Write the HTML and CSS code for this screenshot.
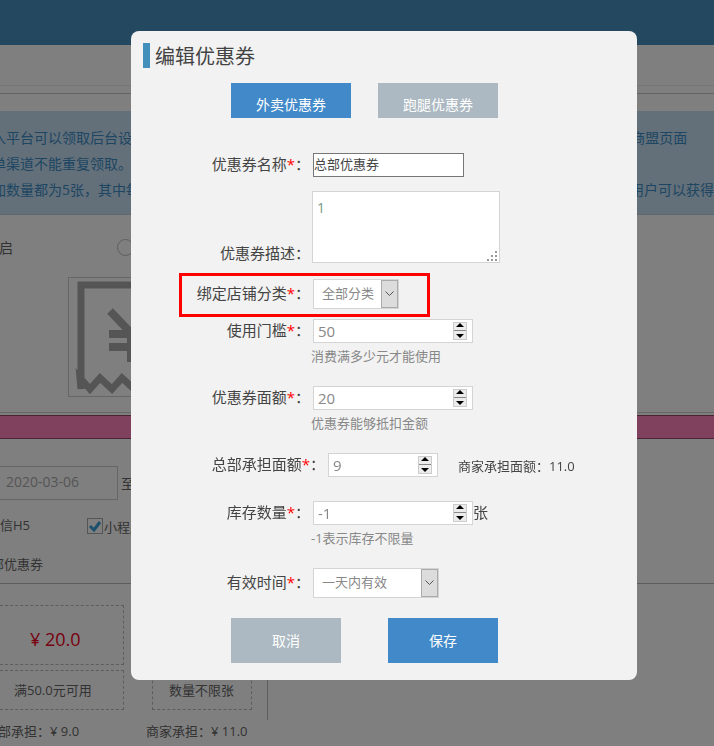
FILE: index.html
```html
<!DOCTYPE html>
<html lang="zh-CN">
<head>
<meta charset="utf-8">
<title>编辑优惠券</title>
<link rel="stylesheet" href="styles.css">
</head>
<body>
<div class="page">
  <header class="topbar"></header>
  <div class="nav-strip"></div>
  <div class="nav-under"></div>
  <section class="alert">
    <p>用户进入平台可以领取后台设置的优惠券，通过微信小程序及5个pc端渠道发放，领取成功后的优惠券将显示在商盟页面</p>
    <p>同一订单渠道不能重复领取。</p>
    <p>例如增加数量都为5张，其中每个渠道可领取的优惠券数量相同，当库存充足时，同一个渠道的所有注册成功的用户可以获得</p>
  </section>
  <div class="switch-row">
    <span class="switch-label">是否开启</span>
    <span class="radio"></span>
  </div>
  <div class="cover">
    <svg class="cover-icon" width="118" height="118" viewBox="0 0 118 118"><path d="M12 111V7h94v104l-9-11-10 11-12-11-10 11-12-11-10 11-12-11-10 11-10-11z" fill="none" stroke="#aaa" stroke-width="7"/><path d="M41 33l21 22 21-22M40 56h44M40 69h44" fill="none" stroke="#aaa" stroke-width="8"/><path d="M62 52v32" fill="none" stroke="#aaa" stroke-width="8"/></svg>
  </div>
  <div class="rule"></div>
  <div class="pink-bar"></div>
  <div class="date-row">
    <span class="date-input">2020-03-06</span>
    <span class="date-sep">至</span>
  </div>
  <div class="check-row">
    <span class="check-first">微信H5</span>
    <span class="checkbox"><svg width="14" height="14" viewBox="0 0 14 14"><path d="M2 7l4 4 6-8" fill="none" stroke="#3aa0d8" stroke-width="3"/></svg></span>
    <span>小程序</span>
  </div>
  <div class="section-title">全部优惠券</div>
  <div class="cards">
    <div class="card-col">
      <div class="price">¥ 20.0</div>
      <div class="cond">满50.0元可用</div>
    </div>
    <div class="card-second">
      <div class="cond cond-second">数量不限张</div>
    </div>
  </div>
  <div class="shares">
    <span class="share-a">总部承担：¥ 9.0</span>
    <span>商家承担：¥ 11.0</span>
  </div>
</div>

<div class="overlay"></div>

<div class="modal">
  <h2 class="modal-title">编辑优惠券</h2>
  <div class="tabs">
    <span class="tab tab-on">外卖优惠券</span>
    <span class="tab tab-off">跑腿优惠券</span>
  </div>

  <div class="row row-name">
    <label class="lbl">优惠券名称<i>*</i>：</label>
    <div class="field field-name">总部优惠券</div>
  </div>

  <div class="row row-desc">
    <label class="lbl">优惠券描述：</label>
    <div class="area"><span>1</span><svg class="grip" width="10" height="10" viewBox="0 0 10 10"><path d="M8 0h2v2H8zM4 4h2v2H4zM8 4h2v2H8zM0 8h2v2H0zM4 8h2v2H4zM8 8h2v2H8z" fill="#999"/></svg></div>
  </div>

  <div class="row row-shop">
    <label class="lbl">绑定店铺分类<i>*</i>：</label>
    <div class="select select-shop"><span class="sel-text">全部分类</span><span class="select-btn"><svg width="9" height="6" viewBox="0 0 9 6"><path d="M.5.5l4 4 4-4" fill="none" stroke="#555"/></svg></span></div>
    <span class="highlight"></span>
  </div>

  <div class="row row-tight">
    <label class="lbl">使用门槛<i>*</i>：</label>
    <div class="field field-num">50<span class="spin"><b class="up"></b><b class="down"></b></span></div>
  </div>
  <p class="hint">消费满多少元才能使用</p>

  <div class="row row-gap">
    <label class="lbl">优惠券面额<i>*</i>：</label>
    <div class="field field-num">20<span class="spin"><b class="up"></b><b class="down"></b></span></div>
  </div>
  <p class="hint">优惠券能够抵扣金额</p>

  <div class="row row-gap row-hq">
    <label class="lbl lbl-wide">总部承担面额<i>*</i>：</label>
    <div class="field field-hq">9<span class="spin"><b class="up"></b><b class="down"></b></span></div>
    <span class="merchant">商家承担面额：11.0</span>
  </div>

  <div class="row row-stock">
    <label class="lbl">库存数量<i>*</i>：</label>
    <div class="field field-num">-1<span class="spin"><b class="up"></b><b class="down"></b></span></div>
    <span class="unit">张</span>
  </div>
  <p class="hint">-1表示库存不限量</p>

  <div class="row row-gap">
    <label class="lbl">有效时间<i>*</i>：</label>
    <div class="select select-time"><span class="sel-text">一天内有效</span><span class="select-btn"><svg width="9" height="6" viewBox="0 0 9 6"><path d="M.5.5l4 4 4-4" fill="none" stroke="#555"/></svg></span></div>
  </div>

  <div class="actions">
    <span class="btn btn-cancel">取消</span>
    <span class="btn btn-save">保存</span>
  </div>
</div>
</body>
</html>
```
FILE: styles.css
```css
* { box-sizing: border-box; }
html, body { margin: 0; height: 100%; overflow: hidden; }
body {
  background: #fff;
  font-family: "Open Sans", "Noto Sans CJK SC", sans-serif;
  font-size: 14px;
  color: #666;
}

/* background page, scrolled sideways */
.page { margin-left: -50px; width: 1000px; height: 746px; overflow: hidden; }
.topbar { height: 45px; background: #4691c1; }
.nav-strip { height: 41px; border-bottom: 1px solid #ececec; }
.nav-under { height: 8px; border-bottom: 1px solid #c4c8cc; }
.alert {
  margin-top: 17px;
  height: 104px;
  padding: 14px 0 0;
  background: #c6e0f5;
  border-bottom: 1px solid #b8d0e4;
  color: #3c8bc4;
}
.alert p { margin: 0; height: 26px; line-height: 26px; white-space: nowrap; }
.switch-row { display: flex; align-items: center; height: 32px; margin-top: 16px; }
.switch-label { width: 167px; padding-left: 7px; color: #666; }
.radio { width: 17px; height: 17px; border: 1px solid #bbb; border-radius: 50%; background: #fff; }
.cover { width: 120px; height: 120px; margin: 14px 0 0 118px; border: 1px solid #ccc; background: #fff; }
.cover-icon { display: block; }
.rule { height: 1px; margin-top: 15px; background: #ccc; }
.pink-bar { height: 24px; margin-top: 2px; background: #ff82bd; border: 1px solid #99456b; border-width: 1px 0; }
.date-row { display: flex; align-items: center; margin-top: 27px; padding-left: 18px; }
.date-input { width: 150px; height: 34px; padding-left: 37px; line-height: 30px; border: 1px solid #ccc; color: #aaa; font-size: 14px; }
.date-sep { margin-left: 3px; }
.check-row { display: flex; align-items: center; height: 22px; margin-top: 15px; padding-left: 37px; font-size: 13px; }
.check-first { width: 100px; line-height: 18px; margin-top: -3px; }
.checkbox { display: flex; align-items: center; justify-content: center; width: 16px; height: 16px; margin-right: 1px; border: 1px solid #aaa; background: #fff; }
.section-title { height: 20px; margin-top: 17px; padding-left: 28px; font-size: 13px; line-height: 20px; }
.cards {
  display: flex;
  height: 137px;
  padding-top: 21px;
  margin-top: 9px;
  padding-left: 40px;
  border-top: 1px solid #bbb;
  background: linear-gradient(#bbb, #bbb) 317px 0 / 1px 100% no-repeat;
}
.card-col { width: 134px; }
.price {
  height: 60px;
  line-height: 66px;
  padding-left: 39px;
  margin-bottom: 5px;
  border: 1px dashed #bbb;
  color: #f00020;
  font-size: 18px;
}
.cond {
  height: 40px;
  line-height: 38px;
  padding-left: 23px;
  border: 1px dashed #bbb;
  font-size: 13px;
}
.card-second {
  width: 100px;
  padding-top: 65px;
  margin-left: 28px;
  background: linear-gradient(#bbb, #bbb) -15px 74px / 1px 18px no-repeat;
}
.cond-second { width: 100px; padding-left: 16px; }
.shares { display: flex; margin-top: -3px; padding-left: 35px; height: 28px; line-height: 28px; font-size: 13px; }
.share-a { width: 161px; }

/* dimming layer */
.overlay { position: fixed; inset: 0; background: rgba(0, 0, 0, .5); }

/* dialog */
.modal {
  position: fixed;
  left: 131px;
  top: 31px;
  width: 506px;
  height: 649px;
  padding-top: 12px;
  background: #f2f2f2;
  border-radius: 8px;
  color: #444;
  font-size: 15px;
}
.modal-title {
  display: flex;
  align-items: center;
  height: 25px;
  margin: 0 0 0 12px;
  padding: 2px 0 0 5px;
  border-left: 7px solid #428fbc;
  color: #444;
  font-size: 20px;
  font-weight: 400;
  line-height: 30px;
}
.tabs { display: flex; gap: 27px; margin: 15px 0 0 100px; }
.tab { width: 120px; height: 35px; padding-top: 10px; color: #fff; font-size: 14px; line-height: 24px; text-align: center; overflow: hidden; }
.tab-on { background: #4189c9; }
.tab-off { background: #acb9c2; }

.row { position: relative; display: flex; align-items: center; padding-left: 182px; }
.lbl { position: absolute; right: 327px; white-space: nowrap; line-height: 20px; margin-top: -2px; color: #444; }
.lbl-wide { right: 312px; }
.lbl i { color: #f00; font-style: normal; }
.row-name { margin-top: 35px; }
.row-desc { margin-top: 14px; padding-left: 181px; }
.row-desc .lbl { bottom: 0; }
.row-shop { margin-top: 16px; }
.row-tight { margin-top: 10px; }
.row-gap { margin-top: 21px; }
.row-hq { padding-left: 197px; margin-top: 21px; }
.row-stock { margin-top: 24px; }

.field {
  display: flex;
  align-items: center;
  height: 24px;
  padding-left: 4px;
  background: #fff;
  border: 1px solid #d4d4d4;
  color: #888;
  line-height: 20px;
}
.field-name { width: 151px; padding: 0 0 2px; border-color: #777; color: #444; font-size: 13px; }
.field-num { width: 160px; padding-bottom: 1px; }
.field-hq { width: 110px; padding-bottom: 1px; }
.spin { display: flex; flex-direction: column; gap: 1px; width: 14px; height: 18px; margin-left: auto; margin-right: 5px; background: #888; border: 1px solid #ccc; }
.spin b { position: relative; flex: 1; background: #ececec; }
.spin b::before { content: ""; position: absolute; left: 2px; border: 4px solid transparent; }
.spin .up::before { top: 0; border-top-width: 0; border-bottom: 4px solid #000; }
.spin .down::before { top: 3px; border-bottom-width: 0; border-top: 4px solid #000; }

.area {
  position: relative;
  width: 188px;
  height: 72px;
  padding: 6px 4px;
  background: #fff;
  border: 1px solid #d4d4d4;
  color: #7a9a88;
  font-size: 14px;
  line-height: 20px;
}
.grip { position: absolute; right: 2px; bottom: 1px; }

.select {
  display: flex;
  align-items: center;
  height: 30px;
  padding-left: 8px;
  background: #fff;
  border: 1px solid #d4d4d4;
  color: #888;
  font-size: 13px;
}
.sel-text { margin-top: -3px; }
.select-shop { width: 86px; }
.select-time { width: 126px; }
.select-btn {
  display: flex;
  align-items: center;
  justify-content: center;
  width: 17px;
  height: 28px;
  margin-left: auto;
  background: #dcdcdc;
  border: 1px solid #aaa;
}
.highlight {
  position: absolute;
  left: 48px;
  top: -6px;
  width: 251px;
  height: 44px;
  border: 3px solid #f00;
}
.hint { margin: 4px 0 0 180px; height: 18px; line-height: 18px; color: #888; font-size: 13px; }
.merchant { margin-left: 20px; font-size: 13px; color: #444; }
.unit { margin-top: -3px; color: #444; }
.actions { display: flex; gap: 47px; margin: 20px 0 0 100px; }
.btn { width: 110px; height: 45px; line-height: 46px; color: #fff; font-size: 14px; text-align: center; }
.btn-cancel { background: #acb9c2; }
.btn-save { background: #4189c9; }
```
